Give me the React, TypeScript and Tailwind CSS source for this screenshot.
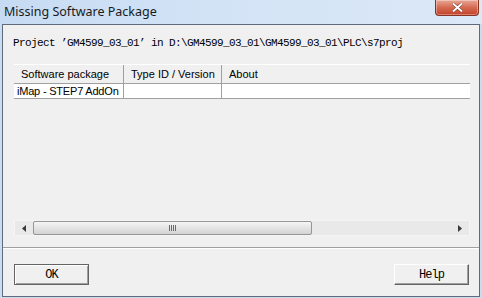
const mono = { fontFamily: '"Liberation Mono", "DejaVu Sans Mono", monospace' };

function ClassicButton({ label, isDefault }: { label: string; isDefault?: boolean }) {
  return (
    <button
      className={
        "w-[75px] h-[21px] bg-[#f0f0f0] text-[12px] tracking-[-1px] text-black flex items-center justify-center " +
        (isDefault
          ? "border border-[#646464] shadow-[inset_1px_1px_0_#ffffff,inset_-1px_-1px_0_#a0a0a0]"
          : "border-t border-l border-t-white border-l-white border-r border-b border-r-[#646464] border-b-[#646464] shadow-[inset_-1px_-1px_0_#a0a0a0]")
      }
      style={mono}
    >
      {label}
    </button>
  );
}

function ScrollBar() {
  return (
    <div className="h-[16px] flex items-stretch bg-[#e9e9e9] border border-[#f4f4f4]">
      <div className="w-[18px] flex items-center justify-center">
        <svg width="4" height="7" viewBox="0 0 4 7">
          <path d="M4 0 L0 3.5 L4 7 Z" fill="#3a3a3a" />
        </svg>
      </div>
      <div className="w-[279px] rounded-[2px] border border-[#969696] bg-gradient-to-b from-[#f5f5f5] via-[#e4e4e4] to-[#d3d3d3] flex items-center justify-center">
        <div className="flex gap-[1px]">
          <div className="w-[1px] h-[6px] bg-[#6a6a6a]" />
          <div className="w-[1px] h-[6px] bg-[#6a6a6a]" />
          <div className="w-[1px] h-[6px] bg-[#6a6a6a]" />
          <div className="w-[1px] h-[6px] bg-[#6a6a6a]" />
        </div>
      </div>
      <div className="flex-1" />
      <div className="w-[18px] flex items-center justify-center">
        <svg width="4" height="7" viewBox="0 0 4 7">
          <path d="M0 0 L4 3.5 L0 7 Z" fill="#3a3a3a" />
        </svg>
      </div>
    </div>
  );
}

export default function App() {
  const sans = { fontFamily: '"Liberation Sans", Arial, sans-serif' };
  return (
    <div className="w-[482px] h-[298px] bg-[#c9dcf2] flex flex-col px-[2px] pb-[1px]">
      <div className="h-[24px] -mx-[2px] flex items-start justify-between bg-gradient-to-r from-[#c6dbf3] via-[#d4e4f6] to-[#dbe8f7]">
        <span
          className="pl-[4px] pt-[3px] text-[12.5px] text-[#1a1a1a] leading-[18px]"
          style={{ fontFamily: '"Noto Sans", "Open Sans", sans-serif' }}
        >
          Missing Software Package
        </span>
        <div className="mr-[3px] w-[44px] h-[16px] rounded-b-[4px] border border-t-0 border-[#8a3322] bg-gradient-to-b from-[#e9a696] via-[#d46a52] to-[#c23f27] flex items-center justify-center shadow-[inset_0_0_0_1px_rgba(255,255,255,0.35)]">
          <svg width="11" height="9" viewBox="0 0 11 9">
            <path d="M1 0.5 L10 8.5 M10 0.5 L1 8.5" stroke="#6b2a1d" strokeWidth="3" />
            <path d="M1 0.5 L10 8.5 M10 0.5 L1 8.5" stroke="#ffffff" strokeWidth="2" />
          </svg>
        </div>
      </div>

      <div className="flex-1 bg-[#f0f0f0] border border-[#5d6b7a] flex flex-col">
        <div className="pl-[10px] mt-[11px] h-[14px] leading-[14px] text-[11px] tracking-[-0.6px] text-black whitespace-nowrap" style={mono}>
          Project ’GM4599_03_01’ in D:\GM4599_03_01\GM4599_03_01\PLC\s7proj
        </div>

        <div className="ml-[11px] mr-[9px] mt-[14px] h-[173px] flex flex-col text-[11px] text-black whitespace-nowrap" style={sans}>
          <div className="h-[20px] flex border-t border-white border-b border-b-[#a0a0a0] bg-[#f0f0f0]">
            <div className="w-[110px] shrink-0 overflow-hidden pl-[7px] leading-[18px] border-r border-[#a0a0a0]">Software package</div>
            <div className="w-[98px] shrink-0 overflow-hidden pl-[7px] leading-[18px] border-r border-[#a0a0a0]">Type ID / Version</div>
            <div className="flex-1 pl-[7px] leading-[18px]">About</div>
          </div>
          <div className="h-[15px] flex bg-white border-b border-[#a0a0a0]">
            <div className="w-[110px] shrink-0 overflow-hidden pl-[3px] leading-[14px] tracking-[-0.2px] border-r border-[#a0a0a0]">iMap - STEP7 AddOn</div>
            <div className="w-[98px] shrink-0 border-r border-[#a0a0a0]" />
            <div className="flex-1" />
          </div>
          <div className="flex-1" />
          <ScrollBar />
          <div className="h-[1px]" />
        </div>

        <div className="mt-[10px] h-[1px] bg-[#a0a0a0]" />
        <div className="h-[1px] bg-white" />

        <div className="mt-[15px] pl-[11px] pr-[10px] flex justify-between">
          <ClassicButton label="OK" isDefault />
          <ClassicButton label="Help" />
        </div>
      </div>
    </div>
  );
}
